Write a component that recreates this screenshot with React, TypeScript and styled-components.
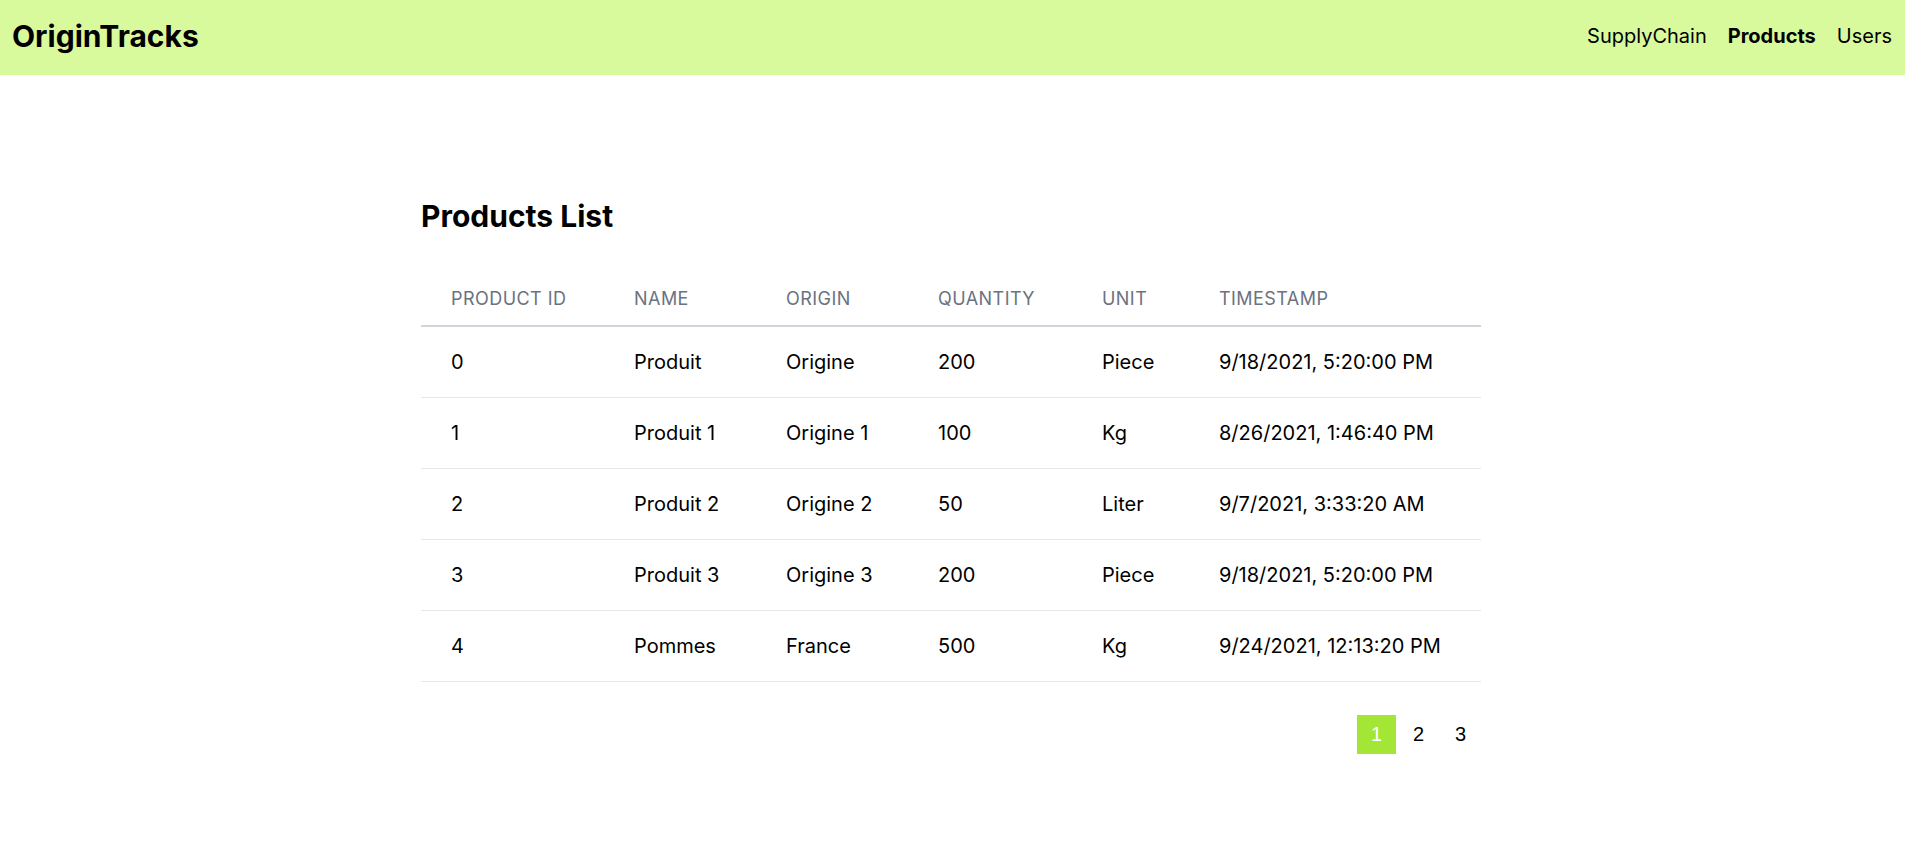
import React from "react";
import styled, { createGlobalStyle } from "styled-components";

const GlobalStyle = createGlobalStyle`
  html, body { margin: 0; padding: 0; background: #ffffff; }
  body { font-family: Inter, "Noto Sans", sans-serif; color: #000000; }
  * { box-sizing: border-box; }
`;

const Header = styled.header`
  height: 75px;
  background: #d9f99d;
  display: flex;
  align-items: center;
  justify-content: space-between;
  padding: 0 13px 4px 12px;
`;

const Logo = styled.div`
  font-size: 30px;
  line-height: 36px;
  font-weight: 700;
  color: #000;
`;

const Nav = styled.nav`
  display: flex;
  gap: 21px;
  align-items: center;
`;

const NavLink = styled.a<{ $active?: boolean }>`
  font-size: 20px;
  line-height: 28px;
  color: #000;
  text-decoration: none;
  font-weight: ${(p) => (p.$active ? 700 : 400)};
  cursor: pointer;
`;

const Main = styled.main`
  width: 1063px;
  margin: 0 auto;
  padding-top: 123px;
`;

const Title = styled.h1`
  margin: 0 0 39px 0;
  font-size: 30px;
  line-height: 36px;
  font-weight: 700;
  color: #000;
`;

const Table = styled.table`
  width: 1060px;
  border-collapse: collapse;
  table-layout: fixed;
`;

const Th = styled.th`
  text-align: left;
  font-weight: 400;
  font-size: 18px;
  line-height: 28px;
  text-transform: uppercase;
  letter-spacing: 0.025em;
  color: #6b7280;
  padding: 12px 30px;
  border-bottom: 2px solid #d1d5db;
  white-space: nowrap;
`;

const Td = styled.td`
  font-size: 20px;
  line-height: 28px;
  padding: 21px 30px;
  color: #000;
  border-bottom: 1px solid #e5e7eb;
  white-space: nowrap;
`;

const Pagination = styled.div`
  display: flex;
  justify-content: flex-end;
  gap: 3px;
  margin-top: 33px;
  padding-right: 4px;
`;

const PageButton = styled.button<{ $active?: boolean }>`
  width: 39px;
  height: 39px;
  border: none;
  padding: 0;
  font-family: "Liberation Sans", Arial, sans-serif;
  font-size: 20px;
  line-height: 39px;
  color: ${(p) => (p.$active ? "#ffffff" : "#000000")};
  background: ${(p) => (p.$active ? "#a3e635" : "transparent")};
  cursor: pointer;
`;

const columns = [
  { label: "Product ID", width: 183 },
  { label: "Name", width: 152 },
  { label: "Origin", width: 152 },
  { label: "Quantity", width: 164 },
  { label: "Unit", width: 117 },
  { label: "Timestamp", width: 292 },
];

const rows = [
  ["0", "Produit", "Origine", "200", "Piece", "9/18/2021, 5:20:00 PM"],
  ["1", "Produit 1", "Origine 1", "100", "Kg", "8/26/2021, 1:46:40 PM"],
  ["2", "Produit 2", "Origine 2", "50", "Liter", "9/7/2021, 3:33:20 AM"],
  ["3", "Produit 3", "Origine 3", "200", "Piece", "9/18/2021, 5:20:00 PM"],
  ["4", "Pommes", "France", "500", "Kg", "9/24/2021, 12:13:20 PM"],
];

export default function App() {
  return (
    <>
      <GlobalStyle />
      <Header>
        <Logo>OriginTracks</Logo>
        <Nav>
          <NavLink>SupplyChain</NavLink>
          <NavLink $active>Products</NavLink>
          <NavLink>Users</NavLink>
        </Nav>
      </Header>
      <Main>
        <Title>Products List</Title>
        <Table>
          <colgroup>
            {columns.map((c) => (
              <col key={c.label} style={{ width: c.width }} />
            ))}
          </colgroup>
          <thead>
            <tr>
              {columns.map((c) => (
                <Th key={c.label}>{c.label}</Th>
              ))}
            </tr>
          </thead>
          <tbody>
            {rows.map((r) => (
              <tr key={r[0]}>
                {r.map((cell, i) => (
                  <Td key={i}>{cell}</Td>
                ))}
              </tr>
            ))}
          </tbody>
        </Table>
        <Pagination>
          <PageButton $active>1</PageButton>
          <PageButton>2</PageButton>
          <PageButton>3</PageButton>
        </Pagination>
      </Main>
    </>
  );
}
